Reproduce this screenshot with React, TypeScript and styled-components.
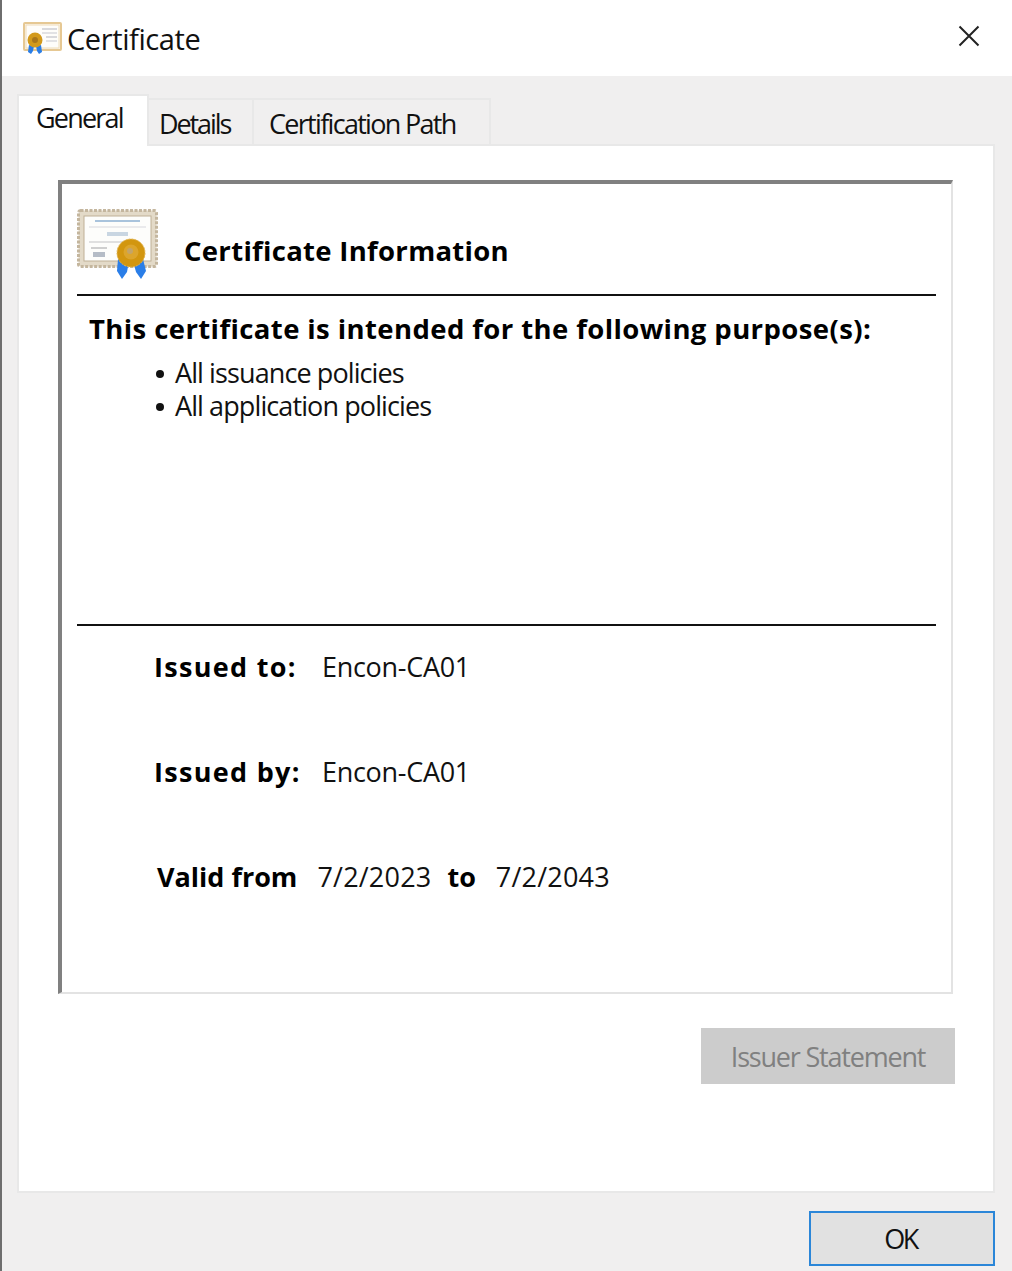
import styled, { createGlobalStyle } from "styled-components";

const GlobalStyle = createGlobalStyle`
  html, body {
    margin: 0;
    padding: 0;
    background: #ffffff;
  }
  body {
    font-family: "Open Sans", "Noto Sans", "Liberation Sans", sans-serif;
    color: #000000;
  }
`;

const Dialog = styled.div`
  width: 1012px;
  height: 1271px;
  box-sizing: border-box;
  border-left: 2px solid #6e6e6e;
  display: flex;
  flex-direction: column;
  overflow: hidden;
  background: #f0efef;
`;

const TitleBar = styled.div`
  height: 76px;
  flex: none;
  background: #ffffff;
  display: flex;
  align-items: center;
  padding: 0 32px 0 21px;
  gap: 5px;
`;

const TitleText = styled.div`
  font-size: 29px;
  letter-spacing: -0.4px;
  line-height: 40px;
  margin-top: 2px;
  flex: 1;
  color: #111111;
`;

const CloseButton = styled.button`
  border: 0;
  padding: 0;
  background: none;
  width: 22px;
  height: 22px;
  margin-top: -5px;
  display: block;
`;

const Body = styled.div`
  flex: 1;
  display: flex;
  flex-direction: column;
  padding: 18px 17px 5px 15px;
`;

const TabRow = styled.div`
  display: flex;
  align-items: flex-end;
  height: 50px;
  flex: none;
  position: relative;
  z-index: 1;
`;

const Tab = styled.div<{ $active?: boolean; $width: number; $pad: number; $track: number }>`
  box-sizing: border-box;
  width: ${(p) => p.$width}px;
  height: ${(p) => (p.$active ? 52 : 46)}px;
  margin-bottom: ${(p) => (p.$active ? -2 : 0)}px;
  padding-left: ${(p) => p.$pad}px;
  background: ${(p) => (p.$active ? "#ffffff" : "#f0efef")};
  border: 2px solid #e8e8e8;
  border-left-width: ${(p) => (p.$active ? 2 : 0)}px;
  border-bottom: 0;
  font-size: 27px;
  letter-spacing: ${(p) => p.$track}px;
  line-height: ${(p) => (p.$active ? 44 : 47)}px;
  white-space: nowrap;
  color: #111111;
`;

const Panel = styled.div`
  box-sizing: border-box;
  height: 1049px;
  flex: none;
  background: #ffffff;
  border: 2px solid #e8e8e8;
  padding: 34px 39px 0 39px;
  display: flex;
  flex-direction: column;
`;

const InfoBox = styled.div`
  box-sizing: border-box;
  width: 895px;
  height: 814px;
  flex: none;
  border-style: solid;
  border-color: #808080 #e3e3e3 #e3e3e3 #808080;
  border-width: 4px 2px 2px 4px;
  padding: 25px 15px 0 15px;
  display: flex;
  flex-direction: column;
`;

const InfoHeader = styled.div`
  height: 85px;
  flex: none;
  display: flex;
  gap: 26px;
  border-bottom: 2px solid #111111;
`;

const Heading = styled.div`
  font-size: 27.5px;
  font-weight: 700;
  letter-spacing: 0.3px;
  line-height: 40px;
  margin-top: 22px;
`;

const Purposes = styled.div`
  height: 330px;
  flex: none;
  box-sizing: border-box;
  border-bottom: 2px solid #111111;
  padding: 13px 0 0 12px;
`;

const PurposeTitle = styled.div`
  font-size: 27.5px;
  font-weight: 700;
  letter-spacing: 0.4px;
  line-height: 40px;
  margin-bottom: 8px;
  white-space: nowrap;
`;

const PurposeList = styled.ul`
  list-style: none;
  margin: 0;
  padding: 0 0 0 67px;
`;

const PurposeItem = styled.li`
  display: flex;
  align-items: center;
  font-size: 27px;
  letter-spacing: -0.9px;
  line-height: 32.5px;
  color: #111111;

  &::before {
    content: "";
    width: 8px;
    height: 8px;
    margin: 2px 11px 0 0;
    border-radius: 50%;
    background: #111111;
  }
`;

const Details = styled.div`
  display: flex;
  flex-direction: column;
  padding: 21px 0 0 77px;
  gap: 65px;
`;

const DetailRow = styled.div`
  display: flex;
  height: 40px;
  line-height: 40px;
  font-size: 27px;
  white-space: nowrap;
`;

const Label = styled.span<{ $width?: number; $left?: number; $track?: number }>`
  font-weight: 700;
  width: ${(p) => (p.$width ? `${p.$width}px` : "auto")};
  margin-left: ${(p) => p.$left ?? 0}px;
  letter-spacing: ${(p) => p.$track ?? 0}px;
  flex: none;
`;

const Value = styled.span<{ $left?: number; $track?: number }>`
  margin-left: ${(p) => p.$left ?? 0}px;
  letter-spacing: ${(p) => p.$track ?? -0.3}px;
  color: #111111;
`;

const StatementRow = styled.div`
  display: flex;
  justify-content: flex-end;
  margin-top: 34px;
  margin-right: -1px;
`;

const DisabledButton = styled.button`
  width: 254px;
  height: 56px;
  border: 2px solid #cccccc;
  background: #cccccc;
  color: #808080;
  font-family: inherit;
  font-size: 27px;
  letter-spacing: -1.2px;
  padding: 0;
`;

const Footer = styled.div`
  display: flex;
  justify-content: flex-end;
  margin-top: 18px;
`;

const OkButton = styled.button`
  width: 186px;
  height: 55px;
  box-sizing: border-box;
  border: 2px solid #2b86d8;
  background: #e1e1e1;
  color: #111111;
  font-family: inherit;
  font-size: 27px;
  letter-spacing: -2.5px;
  padding: 0 3px 0 0;
`;

// the reference icons are scaled up bitmaps, so soften the edges a bit
const IconSvg = styled.svg`
  flex: none;
  display: block;
  filter: blur(0.6px);
`;

const TitleIcon = () => (
  <IconSvg width={39} height={33} viewBox="0 0 39 33">
    <rect x="1" y="1" width="37" height="27" rx="1" fill="#fbf7ee" stroke="#e6c893" strokeWidth="2" />
    <rect x="3" y="3" width="33" height="23" fill="#fefdfa" stroke="#efdcb8" strokeWidth="1" />
    <rect x="19" y="6" width="15" height="2" fill="#d9d9dc" />
    <rect x="19" y="10" width="15" height="2" fill="#e2e2e4" />
    <rect x="23" y="14" width="11" height="2" fill="#d9d9dc" />
    <rect x="23" y="18" width="11" height="2" fill="#e2e2e4" />
    <path d="M6 23 L5 30 L8 32 L10 29 L11 24 Z" fill="#2a7de6" />
    <path d="M13 24 L14 29 L16 32 L19 30 L18 23 Z" fill="#2a7de6" />
    <circle cx="12" cy="18" r="7.5" fill="#d39a1c" />
    <circle cx="12" cy="18" r="3" fill="#a9771c" />
  </IconSvg>
);

const CertIcon = () => (
  <IconSvg width={81} height={71} viewBox="0 0 81 71">
    <rect x="1.5" y="1.5" width="78" height="56" rx="2" fill="#e3dac8" stroke="#c4b69e" strokeWidth="3" strokeDasharray="3 1.5" />
    <rect x="7" y="7" width="67" height="45" fill="#fdfdfb" stroke="#bfb096" strokeWidth="1" />
    <rect x="18" y="11" width="45" height="2" fill="#a9c3dc" />
    <rect x="12" y="17" width="57" height="2" fill="#eaeaec" />
    <rect x="30" y="23" width="21" height="4" fill="#c9d6e2" />
    <rect x="12" y="32" width="40" height="2" fill="#e0e0e0" />
    <rect x="14" y="38" width="16" height="2" fill="#cfcfcf" />
    <rect x="16" y="43" width="12" height="5" fill="#b5bcc6" />
    <path d="M41 50 L40 62 L45 70 L50 63 L52 52 Z" fill="#2a7ee8" />
    <path d="M56 52 L59 63 L64 70 L69 62 L66 50 Z" fill="#2a7ee8" />
    <circle cx="54" cy="44" r="14" fill="#d2960f" stroke="#e2b450" strokeWidth="1" strokeDasharray="2 1" />
    <circle cx="54" cy="43" r="7.5" fill="#dca52c" />
    <circle cx="53" cy="42" r="3" fill="#c4a468" />
  </IconSvg>
);

export default function App() {
  return (
    <>
      <GlobalStyle />
      <Dialog>
        <TitleBar>
          <TitleIcon />
          <TitleText>Certificate</TitleText>
          <CloseButton aria-label="Close">
            <svg width="22" height="22" viewBox="0 0 22 22">
              <path d="M1.5 1.5 L20.5 20.5 M20.5 1.5 L1.5 20.5" stroke="#222222" strokeWidth="2" fill="none" />
            </svg>
          </CloseButton>
        </TitleBar>
        <Body>
          <TabRow>
            <Tab $active $width={132} $pad={17} $track={-1.8}>General</Tab>
            <Tab $width={105} $pad={10} $track={-2.1}>Details</Tab>
            <Tab $width={237} $pad={15} $track={-1.7}>Certification Path</Tab>
          </TabRow>
          <Panel>
            <InfoBox>
              <InfoHeader>
                <CertIcon />
                <Heading>Certificate Information</Heading>
              </InfoHeader>
              <Purposes>
                <PurposeTitle>This certificate is intended for the following purpose(s):</PurposeTitle>
                <PurposeList>
                  <PurposeItem>All issuance policies</PurposeItem>
                  <PurposeItem>All application policies</PurposeItem>
                </PurposeList>
              </Purposes>
              <Details>
                <DetailRow>
                  <Label $width={168} $track={1.3}>Issued to:</Label>
                  <Value>Encon-CA01</Value>
                </DetailRow>
                <DetailRow>
                  <Label $width={168} $track={1.3}>Issued by:</Label>
                  <Value>Encon-CA01</Value>
                </DetailRow>
                <DetailRow>
                  <Label $left={3}>Valid from</Label>
                  <Value $left={20} $track={0.2}>7/2/2023</Value>
                  <Label $left={16}>to</Label>
                  <Value $left={20} $track={0.2}>7/2/2043</Value>
                </DetailRow>
              </Details>
            </InfoBox>
            <StatementRow>
              <DisabledButton disabled>Issuer Statement</DisabledButton>
            </StatementRow>
          </Panel>
          <Footer>
            <OkButton>OK</OkButton>
          </Footer>
        </Body>
      </Dialog>
    </>
  );
}
